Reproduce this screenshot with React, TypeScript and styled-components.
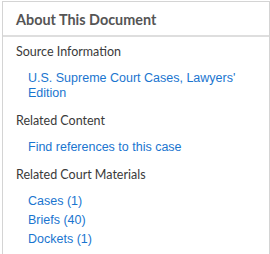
import styled, { createGlobalStyle } from "styled-components";

const GlobalStyle = createGlobalStyle`
  body {
    margin: 0;
    background: #fff;
  }
`;

const Page = styled.div`
  padding: 1px 0 0 2px;
`;

const Panel = styled.section`
  border: 1px solid #d4d4d4;
  border-bottom: none;
  height: 253px;
  box-sizing: border-box;
`;

const Header = styled.h2`
  margin: 0;
  padding: 8px 13px 0;
  height: 35px;
  box-sizing: border-box;
  border-bottom: 2px solid #dedede;
  font-family: Lato, "Open Sans", sans-serif;
  font-weight: 700;
  font-size: 14.4px;
  line-height: 20px;
  color: #555;
`;

const Body = styled.div`
  padding: 6px 13px 0;
`;

const SectionTitle = styled.h3`
  margin: 0;
  font-family: Lato, "Open Sans", sans-serif;
  font-weight: 400;
  font-size: 12.5px;
  line-height: 18px;
  color: #3a3a3a;
`;

const LinkList = styled.ul`
  list-style: none;
  margin: 0;
  padding: 10px 0 11px 12px;
  display: flex;
  flex-direction: column;
  gap: 4px;
`;

const Link = styled.a`
  font-family: "Liberation Sans", Arial, sans-serif;
  font-size: 12.5px;
  line-height: 15px;
  color: #1a75cf;
  text-decoration: none;
  display: block;
`;

const sections = [
  {
    title: "Source Information",
    links: ["U.S. Supreme Court Cases, Lawyers' Edition"],
  },
  { title: "Related Content", links: ["Find references to this case"] },
  {
    title: "Related Court Materials",
    links: ["Cases (1)", "Briefs (40)", "Dockets (1)"],
  },
];

export default function App() {
  return (
    <Page>
      <GlobalStyle />
      <Panel>
        <Header>About This Document</Header>
        <Body>
          {sections.map((s) => (
            <div key={s.title}>
              <SectionTitle>{s.title}</SectionTitle>
              <LinkList>
                {s.links.map((l) => (
                  <li key={l}>
                    <Link href="#">{l}</Link>
                  </li>
                ))}
              </LinkList>
            </div>
          ))}
        </Body>
      </Panel>
    </Page>
  );
}
